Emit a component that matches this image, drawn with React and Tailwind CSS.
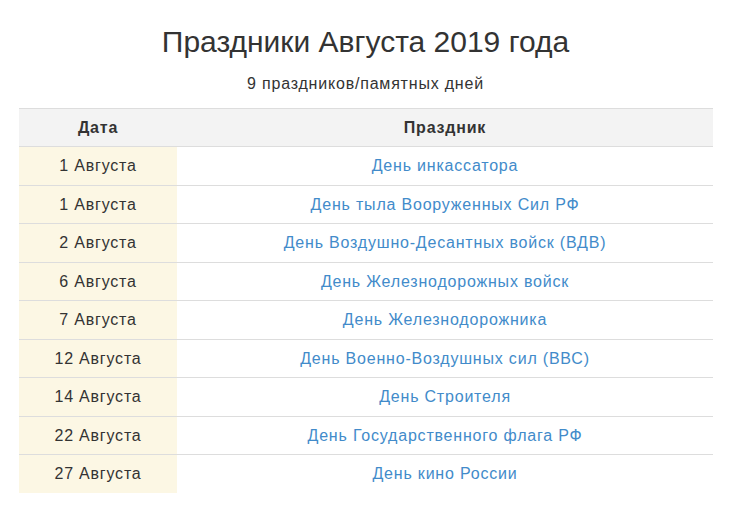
const holidays = [
  { date: "1 Августа", name: "День инкассатора" },
  { date: "1 Августа", name: "День тыла Вооруженных Сил РФ" },
  { date: "2 Августа", name: "День Воздушно-Десантных войск (ВДВ)" },
  { date: "6 Августа", name: "День Железнодорожных войск" },
  { date: "7 Августа", name: "День Железнодорожника" },
  { date: "12 Августа", name: "День Военно-Воздушных сил (ВВС)" },
  { date: "14 Августа", name: "День Строителя" },
  { date: "22 Августа", name: "День Государственного флага РФ" },
  { date: "27 Августа", name: "День кино России" },
]

export default function App() {
  return (
    <div className="min-h-screen bg-white px-[19px] pt-[25px] text-[#333] font-['Liberation_Sans',Arial,sans-serif]">
      {/* Heading */}
      <h2 className="text-center text-[30px] leading-[33px]">Праздники Августа 2019 года</h2>
      <p className="mt-[14px] text-center text-[16px] leading-[23px] tracking-[0.8px]">9 праздников/памятных дней</p>

      {/* Table */}
      <table className="mt-[12.5px] w-[694px] border-collapse text-[16px] tracking-[0.8px]">
        <thead>
          <tr className="bg-[#f3f3f3] border-t border-[#dddddd]">
            <th className="w-[158px] py-2 leading-[21.5px] font-bold text-center">Дата</th>
            <th className="py-2 leading-[21.5px] font-bold text-center">Праздник</th>
          </tr>
        </thead>
        <tbody>
          {holidays.map((h, i) => (
            <tr key={i} className="border-t border-[#dddddd]">
              <td className="bg-[#fcf7e4] py-2 leading-[21.5px] text-center">{h.date}</td>
              <td className="py-2 leading-[21.5px] text-center">
                <a href="#" className="text-[#428bca]">{h.name}</a>
              </td>
            </tr>
          ))}
        </tbody>
      </table>
    </div>
  )
}
